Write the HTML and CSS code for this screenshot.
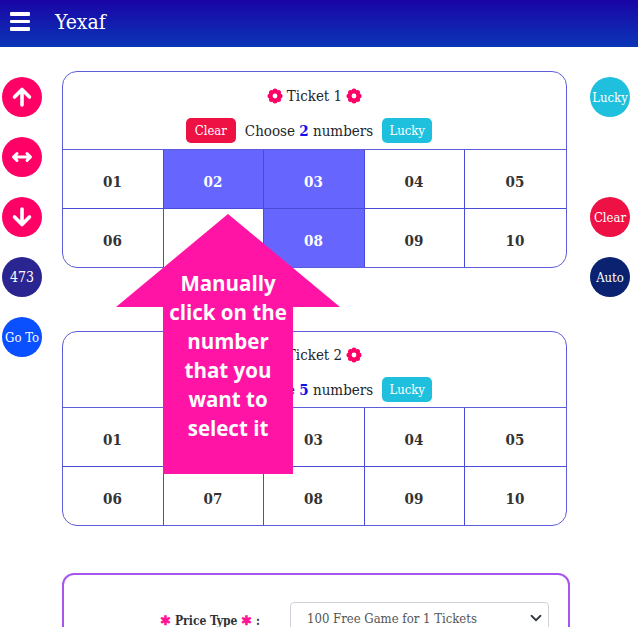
FILE: index.html
```html
<html>
<head>
    <title>Yexaf</title>
    <link rel="stylesheet" href="styles.css">
</head>
<body>
    <header>
        <div class="menu-icon"><span></span><span></span><span></span></div>
        <div class="brand">Yexaf</div>
    </header>

    <div class="page">
        <!-- Left side buttons -->
        <div class="side-buttons">
            <div class="round-btn pink">
                <svg width="22" height="22" viewBox="0 0 22 22"><path d="M11 19V4M3.500 11L11 3.500 18.500 11" fill="none" stroke="#fff" stroke-width="3.6" stroke-linecap="round" stroke-linejoin="round"/></svg>
            </div>
            <div class="round-btn pink">
                <svg width="22" height="22" viewBox="0 0 22 22"><path d="M3 11H19M6 7.500L2.500 11 6 14.500M16 7.500L19.500 11 16 14.500" fill="none" stroke="#fff" stroke-width="3" stroke-linecap="round" stroke-linejoin="round"/></svg>
            </div>
            <div class="round-btn pink">
                <svg width="22" height="22" viewBox="0 0 22 22"><path d="M11 3V18M3.500 11L11 18.500 18.500 11" fill="none" stroke="#fff" stroke-width="3.6" stroke-linecap="round" stroke-linejoin="round"/></svg>
            </div>
            <div class="round-btn indigo">473</div>
            <div class="round-btn blue">Go To</div>
        </div>

        <div class="main">
            <!-- Ticket 1 -->
            <div class="ticket">
                <div class="ticket-head">
                    <div class="ticket-title">
                        <svg class="flower" viewBox="0 0 16 16"><use href="#flower"/></svg>
                        <span>Ticket 1</span>
                        <svg class="flower" viewBox="0 0 16 16"><use href="#flower"/></svg>
                    </div>
                    <div class="ticket-controls">
                        <div class="small-btn clear">Clear</div>
                        <div>Choose <b>2</b> numbers</div>
                        <div class="small-btn lucky">Lucky</div>
                    </div>
                </div>
                <div class="numbers">
                    <div class="num">01</div>
                    <div class="num picked">02</div>
                    <div class="num picked">03</div>
                    <div class="num">04</div>
                    <div class="num">05</div>
                    <div class="num">06</div>
                    <div class="num">07</div>
                    <div class="num picked">08</div>
                    <div class="num">09</div>
                    <div class="num">10</div>
                </div>
            </div>

            <!-- Ticket 2 -->
            <div class="ticket second">
                <div class="ticket-head">
                    <div class="ticket-title">
                        <svg class="flower" viewBox="0 0 16 16"><use href="#flower"/></svg>
                        <span>Ticket 2</span>
                        <svg class="flower" viewBox="0 0 16 16"><use href="#flower"/></svg>
                    </div>
                    <div class="ticket-controls">
                        <div class="small-btn clear">Clear</div>
                        <div>Choose <b>5</b> numbers</div>
                        <div class="small-btn lucky">Lucky</div>
                    </div>
                </div>
                <div class="numbers">
                    <div class="num">01</div>
                    <div class="num">02</div>
                    <div class="num">03</div>
                    <div class="num">04</div>
                    <div class="num">05</div>
                    <div class="num">06</div>
                    <div class="num">07</div>
                    <div class="num">08</div>
                    <div class="num">09</div>
                    <div class="num">10</div>
                </div>
            </div>

            <!-- Price form -->
            <div class="price-card">
                <div class="price-label"><i>&#10033;</i> Price Type <i>&#10033;</i> :</div>
                <div class="price-select">
                    <span>100 Free Game for 1 Tickets</span>
                    <svg width="12" height="12" viewBox="0 0 16 16"><path d="M2 5l6 6 6-6" fill="none" stroke="#343a40" stroke-width="2.400" stroke-linecap="round" stroke-linejoin="round"/></svg>
                </div>
            </div>
        </div>

        <!-- Right side buttons -->
        <div class="side-buttons right">
            <div class="round-btn cyan">Lucky</div>
            <div class="round-spacer"></div>
            <div class="round-btn red">Clear</div>
            <div class="round-btn navy">Auto</div>
        </div>
    </div>

    <!-- Tutorial arrow over the tickets -->
    <div class="hint-arrow">Manually click on the number that you want to select it</div>

    <svg class="defs" width="0" height="0">
        <symbol id="flower" viewBox="0 0 16 16">
            <g fill="#ff0066">
                <circle cx="8" cy="3" r="2.500"/>
                <circle cx="8" cy="13" r="2.500"/>
                <circle cx="3" cy="8" r="2.500"/>
                <circle cx="13" cy="8" r="2.500"/>
                <circle cx="4.500" cy="4.500" r="2.500"/>
                <circle cx="11.500" cy="4.500" r="2.500"/>
                <circle cx="4.500" cy="11.500" r="2.500"/>
                <circle cx="11.500" cy="11.500" r="2.500"/>
                <circle cx="8" cy="8" r="4"/>
            </g>
            <circle cx="8" cy="8" r="2.400" fill="#fff"/>
        </symbol>
    </svg>
</body>
</html>
```

FILE: styles.css
```css
html, body {
    height: 100%;
    overflow: hidden;
}

body {
    margin: 0;
    position: relative;
    background: #fff;
    color: #212529;
    font-family: 'DejaVu Serif Condensed', 'DejaVu Serif', serif;
    font-size: 15px;
}

header {
    display: flex;
    align-items: center;
    box-sizing: border-box;
    height: 47px;
    padding: 0 0 4px 10px;
    background: linear-gradient(to bottom, #1a04a6, #0a36b6);
    color: white;
}

.menu-icon {
    display: flex;
    flex-direction: column;
    gap: 4px;
    width: 20px;
}

.menu-icon span {
    height: 3.5px;
    background: white;
    border-radius: 1px;
}

.brand {
    margin-left: 25px;
    font-size: 21px;
}

.page {
    display: flex;
    align-items: flex-start;
    padding-left: 2px;
}

.side-buttons {
    display: flex;
    flex-direction: column;
    gap: 20px;
    padding-top: 30px;
}

.side-buttons.right {
    margin-left: 20px;
}

.round-btn {
    display: flex;
    align-items: center;
    justify-content: center;
    width: 40px;
    height: 40px;
    border-radius: 50%;
    color: white;
    font-size: 13px;
    white-space: nowrap;
}

.round-spacer {
    height: 40px;
}

.pink { background: #ff0066; }
.indigo { background: #2a2590; font-size: 14px; }
.blue { background: #0a50ff; }
.cyan { background: #1fc0de; }
.red { background: #ee1144; }
.navy { background: #0a2270; }

.main {
    width: 508px;
    margin-left: 20px;
    padding-top: 24px;
}

.ticket {
    width: 505px;
    box-sizing: border-box;
    border: 1px solid #5d5ddc;
    border-radius: 15px;
    overflow: hidden;
}

.ticket.second {
    margin-top: 63px;
}

.ticket-head {
    height: 77px;
    padding-top: 14px;
    box-sizing: border-box;
}

.second .ticket-head {
    height: 75px;
    padding-top: 13px;
}

.ticket-title {
    display: flex;
    align-items: center;
    justify-content: center;
    gap: 4px;
    height: 20px;
}

.flower {
    width: 16px;
    height: 16px;
}

.ticket-controls {
    display: flex;
    align-items: center;
    justify-content: center;
    gap: 9px;
    margin-top: 12px;
    padding-right: 11px;
}

.ticket-controls b {
    color: #1111ee;
    font-weight: bold;
}

.small-btn {
    display: flex;
    align-items: center;
    justify-content: center;
    width: 50px;
    height: 25px;
    border-radius: 5px;
    color: white;
    font-size: 13px;
}

.small-btn.clear { background: #ee1144; }
.small-btn.lucky { background: #1fc0de; }

.numbers {
    display: grid;
    grid-template-columns: 101px 100px 101px 100px 1fr;
    grid-template-rows: 59px 58px;
    border-top: 1px solid #5d5ddc;
}

.num {
    display: flex;
    align-items: center;
    justify-content: center;
    box-sizing: border-box;
    padding: 6px 1px 0 0;
    border-right: 1px solid #4a4ad8;
    border-bottom: 1px solid #4a4ad8;
    font-size: 15px;
    font-weight: 700;
    color: #333;
}

.num:nth-child(5n) { border-right: none; }
.num:nth-child(n+6) { border-bottom: none; }

.num.picked {
    background: #6666ff;
    color: white;
}

.price-card {
    display: flex;
    justify-content: flex-end;
    gap: 30px;
    box-sizing: border-box;
    height: 80px;
    margin-top: 47px;
    padding: 27px 19px 0 0;
    border: 2px solid #a855f0;
    border-radius: 12px;
}

.price-label {
    padding-top: 11px;
    font-size: 12px;
    font-weight: 700;
    color: #333;
}

.price-label i {
    color: #ff1493;
    font-size: 13px;
    font-style: normal;
}

.price-select {
    display: flex;
    align-items: center;
    justify-content: space-between;
    box-sizing: border-box;
    width: 259px;
    height: 38px;
    padding: 0 6px 6px 16px;
    border: 1px solid #ced4da;
    border-radius: 4px;
    font-size: 13px;
    color: #555;
}

.hint-arrow {
    position: absolute;
    left: 116px;
    top: 214px;
    box-sizing: border-box;
    width: 224px;
    height: 260px;
    padding: 55px 47px 0;
    background: #ff14a5;
    clip-path: polygon(50% 0, 100% 93px, 177px 93px, 177px 100%, 47px 100%, 47px 93px, 0 93px);
    color: white;
    font-family: 'Open Sans', sans-serif;
    font-size: 20.5px;
    font-weight: 700;
    line-height: 29px;
    text-align: center;
}

.defs {
    position: absolute;
}
```
